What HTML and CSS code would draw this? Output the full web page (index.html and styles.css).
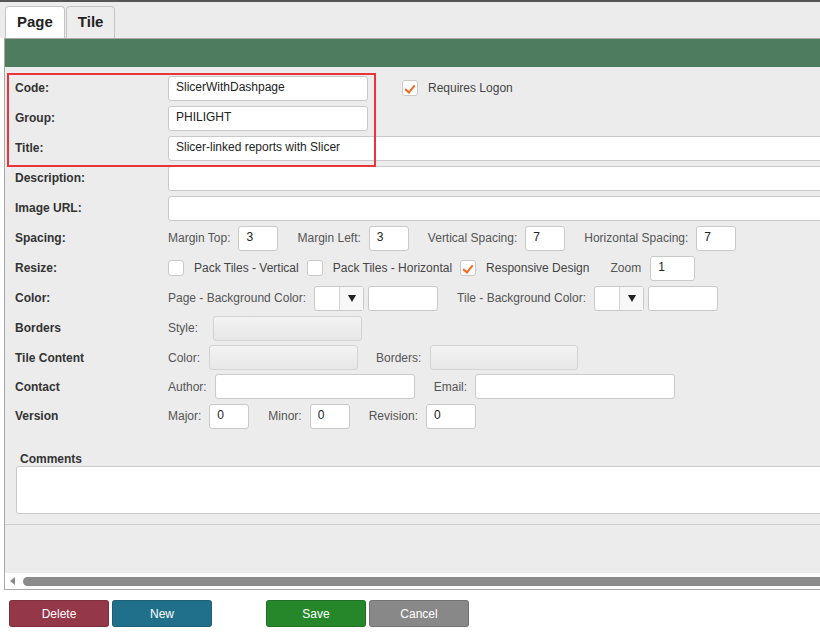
FILE: index.html
```html
<!DOCTYPE html>
<html lang="en">
<head>
    <meta charset="UTF-8">
    <title>Page editor</title>
    <link rel="stylesheet" href="styles.css">
</head>
<body>
    <div class="tabbar">
        <div class="tab active">Page</div>
        <div class="tab">Tile</div>
    </div>
    <div class="panel">
        <div class="panel-head"></div>
        <div class="form">
            <div class="row">
                <div class="label">Code:</div>
                <input class="field w200" value="SlicerWithDashpage">
                <span class="check checked logon"><span class="box"></span>Requires Logon</span>
            </div>
            <div class="row">
                <div class="label">Group:</div>
                <input class="field w200" value="PHILIGHT">
            </div>
            <div class="row">
                <div class="label">Title:</div>
                <input class="field wide" value="Slicer-linked reports with Slicer">
            </div>
            <div class="row">
                <div class="label">Description:</div>
                <input class="field wide" value="">
            </div>
            <div class="row">
                <div class="label">Image URL:</div>
                <input class="field wide" value="">
            </div>
            <div class="row">
                <div class="label">Spacing:</div>
                <span class="cap">Margin Top:</span><input class="field w40" value="3">
                <span class="cap">Margin Left:</span><input class="field w40" value="3">
                <span class="cap">Vertical Spacing:</span><input class="field w40" value="7">
                <span class="cap">Horizontal Spacing:</span><input class="field w40" value="7">
            </div>
            <div class="row">
                <div class="label">Resize:</div>
                <span class="check"><span class="box"></span>Pack Tiles - Vertical</span>
                <span class="check"><span class="box"></span>Pack Tiles - Horizontal</span>
                <span class="check checked"><span class="box"></span>Responsive Design</span>
                <span class="cap zoom">Zoom</span><input class="field w45" value="1">
            </div>
            <div class="row">
                <div class="label">Color:</div>
                <span class="cap">Page - Background Color:</span>
                <span class="picker"><span class="swatch"></span><span class="drop"><span class="arrow"></span></span></span>
                <input class="field w70" value="">
                <span class="cap">Tile - Background Color:</span>
                <span class="picker"><span class="swatch"></span><span class="drop"><span class="arrow"></span></span></span>
                <input class="field w70" value="">
            </div>
            <div class="row">
                <div class="label">Borders</div>
                <span class="cap cap-wide">Style:</span><span class="select-off w149"></span>
            </div>
            <div class="row tight">
                <div class="label">Tile Content</div>
                <span class="cap cap-narrow">Color:</span><span class="select-off w149"></span>
                <span class="cap cap-narrow">Borders:</span><span class="select-off w148"></span>
            </div>
            <div class="row tight">
                <div class="label">Contact</div>
                <span class="cap">Author:</span><input class="field w200" value="">
                <span class="cap">Email:</span><input class="field w200" value="">
            </div>
            <div class="row">
                <div class="label">Version</div>
                <span class="cap">Major:</span><input class="field w40" value="0">
                <span class="cap">Minor:</span><input class="field w40" value="0">
                <span class="cap">Revision:</span><input class="field w50" value="0">
            </div>
        </div>
        <div class="comments">
            <div class="comments-label">Comments</div>
            <textarea class="comments-box"></textarea>
        </div>
        <div class="blank"></div>
        <div class="hscroll">
            <span class="hscroll-arrow"></span>
            <span class="hscroll-thumb"></span>
        </div>
        <!-- highlight round the key fields -->
        <div class="highlight"></div>
    </div>
    <div class="actions">
        <button class="btn btn-delete">Delete</button>
        <button class="btn btn-new">New</button>
        <button class="btn btn-save">Save</button>
        <button class="btn btn-cancel">Cancel</button>
    </div>
</body>
</html>
```

FILE: styles.css
```css
html, body {
    overflow: hidden;
}
body {
    margin: 0;
    background-color: #ffffff;
    font-family: "Liberation Sans", Arial, sans-serif;
    font-size: 12px;
    color: #333333;
    width: 820px;
}
.tabbar {
    border-top: 2px solid #555555;
    background-color: #ececec;
    height: 38px;
    box-sizing: border-box;
    padding: 4px 0 0 5px;
    display: flex;
    align-items: flex-end;
}
.tab {
    height: 32px;
    box-sizing: border-box;
    padding: 0 11px;
    border: 1px solid #c4c4c4;
    border-bottom: none;
    border-radius: 4px 4px 0 0;
    background-color: #ededed;
    font-size: 15px;
    font-weight: bold;
    color: #222222;
    line-height: 30px;
    margin-right: 1px;
}
.tab.active {
    background-color: #ffffff;
}
.panel {
    position: relative;
    width: 920px;
    margin-left: 4px;
    border-top: 1px solid #a8a8a8;
    border-left: 1px solid #a8a8a8;
    border-bottom: 1px solid #a8a8a8;
    background-color: #ececec;
    overflow: hidden;
}
.panel-head {
    height: 28px;
    background-color: #4e7c5e;
}
.form {
    padding: 6px 0 0 10px;
}
.row {
    display: flex;
    align-items: center;
    height: 30px;
    white-space: nowrap;
}
.row.tight {
    height: 29px;
}
.label {
    width: 153px;
    flex: none;
    font-weight: bold;
    color: #333333;
}
.field {
    flex: none;
    height: 25px;
    box-sizing: border-box;
    border: 1px solid #c9c9c9;
    border-radius: 3px;
    background-color: #ffffff;
    font-family: "Liberation Sans", Arial, sans-serif;
    font-size: 12px;
    color: #222222;
    padding: 0 0 2px 7px;
    margin: 0 19px 0 0;
    outline: none;
}
.w40 { width: 40px; }
.w45 { width: 45px; }
.w50 { width: 50px; }
.w70 { width: 70px; margin-right: 19px; }
.w200 { width: 200px; }
.wide { width: 720px; }
.cap {
    color: #555555;
    margin-right: 8px;
}
.cap-wide {
    margin-right: 15px;
}
.cap-narrow {
    margin-right: 9px;
}
.zoom {
    margin-left: 13px;
    margin-right: 9px;
}
.check {
    display: flex;
    align-items: center;
    color: #444444;
    margin-right: 8px;
}
.check .box {
    width: 16px;
    height: 16px;
    box-sizing: border-box;
    border: 1px solid #c9c9c9;
    border-radius: 3px;
    background-color: #ffffff;
    margin-right: 10px;
    position: relative;
}
.check.checked .box::after {
    content: "";
    position: absolute;
    left: 3px;
    top: 2px;
    width: 4px;
    height: 8px;
    border-right: 2px solid #f26b1d;
    border-bottom: 2px solid #f26b1d;
    transform: translate(1px, 0) rotate(40deg);
}
.logon {
    margin-left: 15px;
}
.picker {
    display: flex;
    flex: none;
    width: 50px;
    height: 25px;
    box-sizing: border-box;
    border: 1px solid #c9c9c9;
    border-radius: 3px;
    background-color: #ffffff;
    margin-right: 4px;
}
.swatch {
    width: 24px;
    border-right: 1px solid #d4d4d4;
}
.drop {
    flex: 1;
    display: flex;
    align-items: center;
    justify-content: center;
    background-color: #f7f7f7;
}
.arrow {
    width: 0;
    height: 0;
    border-left: 4px solid transparent;
    border-right: 4px solid transparent;
    border-top: 7px solid #222222;
    margin-top: 1px;
}
.select-off {
    flex: none;
    height: 25px;
    box-sizing: border-box;
    border: 1px solid #d3d3d3;
    border-radius: 3px;
    background: linear-gradient(#f3f3f3, #e7e7e7);
    margin-right: 18px;
}
.w149 { width: 149px; }
.w148 { width: 148px; }
.comments {
    margin-top: 21px;
    padding: 0 0 10px 11px;
    border-bottom: 1px solid #cdcdcd;
}
.comments-label {
    font-weight: bold;
    color: #333333;
    line-height: 14px;
    padding-left: 4px;
}
.comments-box {
    display: block;
    width: 900px;
    height: 48px;
    box-sizing: border-box;
    border: 1px solid #c9c9c9;
    border-radius: 3px;
    background-color: #ffffff;
    resize: none;
    margin: 0;
}
.blank {
    height: 48px;
}
.hscroll {
    height: 16px;
    background-color: #ffffff;
    display: flex;
    align-items: center;
}
.hscroll-arrow {
    width: 0;
    height: 0;
    border-top: 4px solid transparent;
    border-bottom: 4px solid transparent;
    border-right: 5px solid #8a8a8a;
    margin-left: 5px;
}
.hscroll-thumb {
    height: 9px;
    flex: 1;
    margin-left: 8px;
    border-radius: 5px;
    background-color: #8b8b8b;
}
.highlight {
    position: absolute;
    left: 2px;
    top: 34px;
    width: 369px;
    height: 94px;
    box-sizing: border-box;
    border: 2px solid #e8343a;
}
.actions {
    display: flex;
    padding: 10px 0 0 9px;
}
.btn {
    width: 100px;
    height: 27px;
    box-sizing: border-box;
    border: 1px solid rgba(0, 0, 0, 0.15);
    border-radius: 3px;
    color: #ffffff;
    font-family: "Liberation Sans", Arial, sans-serif;
    font-size: 12px;
    margin-right: 3px;
    padding: 0;
}
.btn-delete { background-color: #943748; }
.btn-new { background-color: #21708b; margin-right: 54px; }
.btn-save { background-color: #25872a; }
.btn-cancel { background-color: #888888; }
```
